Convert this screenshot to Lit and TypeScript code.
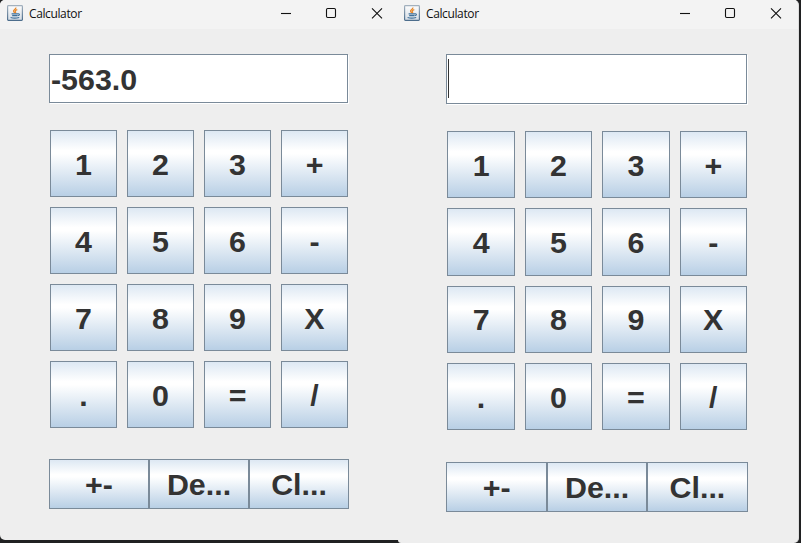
import { LitElement, html, css } from "lit";
import { customElement, property } from "lit/decorators.js";

@customElement("title-bar")
class TitleBar extends LitElement {
  static styles = css`
    :host { display: flex; height: 29px; background: #f3f3f3; flex: none; }
    .logo { width: 16px; height: 16px; margin: 5px 0 0 7px; flex: none; }
    .name { margin: 5px 0 0 6px; font: 12px/17px "Open Sans", "Noto Sans", sans-serif; color: #111; flex: 1; letter-spacing: -0.38px; }
    .controls { width: 120px; height: 29px; flex: none; }
  `;
  render() {
    return html`
      <svg class="logo" viewBox="0 0 16 16" fill="none">
        <defs>
          <linearGradient id="g" x1="0" y1="0" x2="0" y2="1">
            <stop offset="0" stop-color="#fdfdfd" /><stop offset="1" stop-color="#d5dde5" />
          </linearGradient>
          <linearGradient id="b" x1="0" y1="0" x2="0" y2="1">
            <stop offset="0" stop-color="#a3b1be" /><stop offset="1" stop-color="#4c6d8c" />
          </linearGradient>
        </defs>
        <rect x=".6" y=".6" width="14.8" height="14.8" rx=".8" fill="url(#g)" stroke="url(#b)" stroke-width="1.2" />
        <path d="M8.8 2.6c.7 1.5-2.8 2.2-2.2 3.7.2.7.8 1 1.1 1.6M10.3 4.6c-1.5.5-2.4 1.2-1.8 2 .4.5.2.9-.4 1.4" stroke="#e8882a" stroke-width="1.3" />
        <path d="M4.6 8.9h6.2M5.2 10.6h5M10.8 8.9c2.2-.5 2.3 1.4-.3 1.9M3.6 12.5c2.2.7 6.2.7 8.6-.1" stroke="#3f7099" stroke-width="1.1" />
      </svg>
      <span class="name">Calculator</span>
      <svg class="controls" viewBox="0 0 120 29" fill="none" stroke="#111" stroke-width="1.1">
        <path d="M3 13.5h10" />
        <rect x="48.5" y="8.5" width="9" height="9" rx="1.2" />
        <path d="M94 8.3l10 10M104 8.3l-10 10" />
      </svg>
    `;
  }
}

@customElement("calc-window")
class CalcWindow extends LitElement {
  @property() value = "";
  @property({ type: Boolean }) focused = false;

  static styles = css`
    :host { display: flex; flex-direction: column; background: #eeeeee; box-sizing: border-box; overflow: hidden;
      font: bold 30.4px/34px "Liberation Sans", Arial, sans-serif; color: #333; }
    title-bar { margin: 0 var(--bar-right, 0) 0 var(--bar-left, 0); box-shadow: var(--bar-shadow, none); }
    .body { padding: 25px 0 0 var(--left); }
    .display { box-sizing: border-box; width: var(--display-w); height: var(--display-h); background: #fff;
      border: 1px solid #7a8a99; box-shadow: 1px 1px 0 #fff; padding: 7px 0 0 1px; white-space: nowrap; }
    .caret { width: 1px; height: 39px; margin-top: -3px; background: #333; }
    .keys { display: grid; grid-template-columns: repeat(4, var(--key)); grid-auto-rows: var(--key); gap: 10px;
      margin: var(--keys-top) 0 0 1px; }
    .key { box-sizing: border-box; display: flex; align-items: center; justify-content: center;
      border: 1px solid #7a8a99;
      background: linear-gradient(#dde8f3 0%, #fff 30%, #fff 35%, #b8cfe5 100%); }
    .actions { display: grid; grid-template-columns: repeat(3, 1fr); width: var(--actions-w); height: 50px;
      margin-top: var(--actions-top); }
  `;
  render() {
    const keys = ["1", "2", "3", "+", "4", "5", "6", "-", "7", "8", "9", "X", ".", "0", "=", "/"];
    return html`
      <title-bar></title-bar>
      <div class="body">
        <div class="display">${this.focused ? html`<div class="caret"></div>` : this.value}</div>
        <div class="keys">${keys.map((k) => html`<div class="key">${k}</div>`)}</div>
        <div class="actions">${["+-", "De...", "Cl..."].map((k) => html`<div class="key">${k}</div>`)}</div>
      </div>
    `;
  }
}

@customElement("app-root")
class AppRoot extends LitElement {
  static styles = css`
    :host { display: flex; width: 801px; height: 543px; background: #202122; overflow: hidden; }
    .first { width: 398px; height: 540px; border-radius: 5px 0 0 5px; --key: 67px;
      --left: 49px; --display-w: 299px; --display-h: 49px; --keys-top: 27px;
      --actions-w: 300px; --actions-top: 31px; }
    .second { width: 401px; height: 543px; border-radius: 0 5px 5px 3px; border-right: 1px solid #dedede; --key: 67.4px;
      --bar-left: -1px; --bar-right: 1px; --bar-shadow: 1px 0 0 #f3f3f3;
      --left: 48.4px; --display-w: 300.4px; --display-h: 49.5px; --keys-top: 27.4px;
      --actions-w: 301.3px; --actions-top: 31.2px; }
  `;
  render() {
    return html`
      <calc-window class="first" value="-563.0"></calc-window>
      <calc-window class="second" focused></calc-window>
    `;
  }
}
